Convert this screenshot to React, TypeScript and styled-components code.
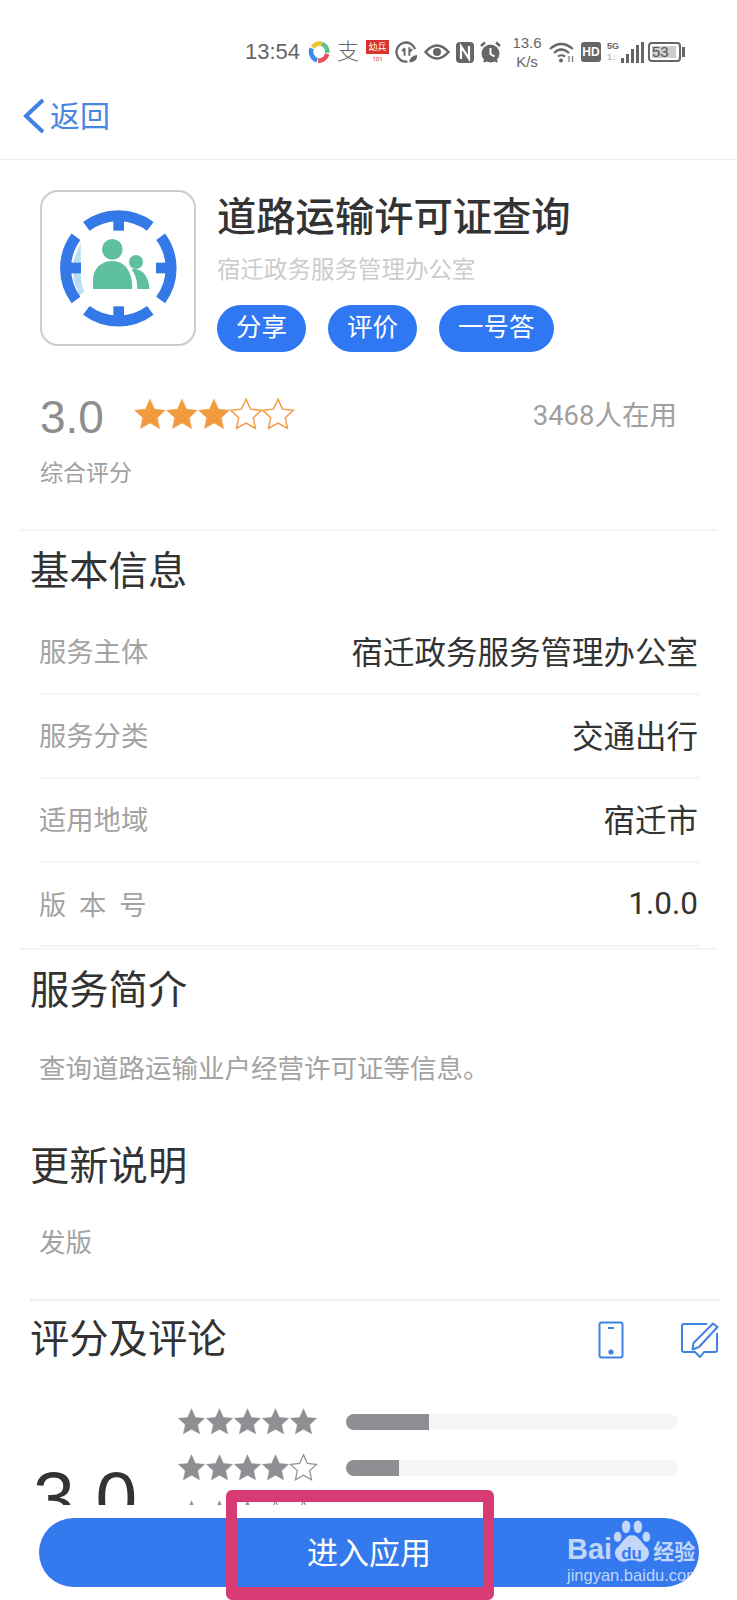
import React from 'react';
import styled, { createGlobalStyle } from 'styled-components';

const GlobalStyle = createGlobalStyle`
  html, body {
    margin: 0;
    padding: 0;
    background: #fff;
  }
  * {
    box-sizing: border-box;
  }
`;

const BLUE = '#3579ee';
const STAR_PATH = 'M12 1.5l3.2 7.1 7.6.8-5.7 5.2 1.6 7.6L12 18.4l-6.7 3.8 1.6-7.6L1.2 9.4l7.6-.8z';

const Star: React.FC<{ size: number; color: string; filled: boolean }> = ({ size, color, filled }) => (
  <svg width={size} height={size} viewBox="0 0 24 24">
    <path d={STAR_PATH} fill={filled ? color : '#fff'} stroke={color} strokeWidth={filled ? 0.4 : 1} strokeLinejoin="miter" />
  </svg>
);

const AppLogo = () => (
  <svg width="152" height="152" viewBox="36 36 456 456">
    <path d="M152 190 L131 240 L131 300 L148 345 L162 335 Q150 300 152 262 Z" fill="#b9dcf7" />
    <g fill="none" stroke="#3579e8" strokeWidth="33">
      <path d="M169 139 A160 160 0 0 1 361 139" />
      <path d="M169 391 A160 160 0 0 0 361 391" />
      <path d="M138 170 A160 160 0 0 0 138 360" />
      <path d="M392 170 A160 160 0 0 1 392 360" />
    </g>
    <g fill="#3579e8">
      <rect x="250" y="115" width="32" height="37" />
      <rect x="250" y="379" width="32" height="37" />
      <rect x="100" y="248" width="53" height="32" />
      <rect x="378" y="248" width="53" height="32" />
    </g>
    <g fill="#5fc0a0">
      <circle cx="247" cy="208" r="31" />
      <path d="M189 327 V300 C189 265 215 243 247 243 C280 243 307 268 307 327 Z" />
      <circle cx="318" cy="246" r="21" />
      <path d="M305 268 C335 262 358 290 358 327 H322 C322 302 316 285 305 268 Z" />
    </g>
  </svg>
);

const StatusIcons = () => (
  <>
    <svg width="22" height="22" viewBox="0 0 24 24" fill="none" strokeWidth="5">
      <path d="M5 7 A10 10 0 0 1 15 3" stroke="#f2c531" />
      <path d="M15 3 A10 10 0 0 1 21 13" stroke="#5cc28a" />
      <path d="M21 14 A10 10 0 0 1 11 21.500" stroke="#e8505b" />
      <path d="M10 21 A10 10 0 0 1 4 8" stroke="#3d8bea" />
    </svg>
    <AlipayGlyph>支</AlipayGlyph>
    <RedBadge>
      <span>幼兵</span>
      <small>101</small>
    </RedBadge>
    <svg width="23" height="24" viewBox="0 0 24 24" fill="none" stroke="#666" strokeWidth="2.400">
      <path d="M21 9 A10 10 0 1 0 13 22" />
      <path d="M10 8 L7.500 11 M10 8 V16 M15 7 V16 M15 12 L18 9" strokeWidth="2" />
      <path d="M15 23 Q15 16 23 15 Q24 22 15 23 Z" fill="#666" stroke="none" />
    </svg>
    <svg width="26" height="18" viewBox="0 0 26 18" fill="none" stroke="#666" strokeWidth="2.500">
      <path d="M1.500 9 Q13 -4 24.500 9 Q13 22 1.500 9 Z" />
      <circle cx="13" cy="9" r="4" fill="#666" stroke="none" />
    </svg>
    <svg width="18" height="21" viewBox="0 0 18 21">
      <rect x="0" y="0" width="18" height="21" rx="4" fill="#666" />
      <path d="M5 17 V4.500 L13 16.500 V4" fill="none" stroke="#fff" strokeWidth="2.200" />
    </svg>
    <svg width="21" height="23" viewBox="0 0 21 23">
      <circle cx="10.500" cy="12.500" r="9" fill="#666" />
      <path d="M1 5 L5 1.500 M20 5 L16 1.500 M4 21 L5.500 19 M17 21 L15.500 19" stroke="#666" strokeWidth="2.400" />
      <path d="M10.500 7 V13 L14.500 15.500" fill="none" stroke="#fff" strokeWidth="2" />
    </svg>
    <NetSpeed>
      <span>13.6</span>
      <span>K/s</span>
    </NetSpeed>
    <svg width="26" height="22" viewBox="0 0 26 22" fill="none" stroke="#666" strokeWidth="2.200">
      <path d="M1 8 Q12 -2 24 8" />
      <path d="M5 12 Q12 5 20 12" />
      <path d="M9 15.500 Q12 13 16 15.500" />
      <circle cx="12" cy="19.500" r="2" fill="#666" stroke="none" />
      <path d="M20 15 V21 M23.500 15 V21" stroke="#888" strokeWidth="1.400" />
    </svg>
    <HdBadge>HD</HdBadge>
    <Signal>
      <SignalLabels>
        <span>5G</span>
        <em>1↓</em>
      </SignalLabels>
      <SignalBars>
        {[5, 9, 14, 18, 21].map((h) => (
          <i key={h} style={{ height: h }} />
        ))}
      </SignalBars>
    </Signal>
    <Battery>
      <BatteryBody>
        <span>53</span>
      </BatteryBody>
      <BatteryCap />
    </Battery>
  </>
);

const PhoneIcon = () => (
  <svg width="26" height="38" viewBox="0 0 26 38" fill="none" stroke="#3f82e0" strokeWidth="2">
    <rect x="1.500" y="1.500" width="23" height="35" rx="2" />
    <path d="M10 7 H16" />
    <circle cx="13" cy="31" r="1.600" fill="#3f82e0" />
  </svg>
);

const EditIcon = () => (
  <svg width="39" height="37" viewBox="0 0 39 37" fill="none" stroke="#3f82e0" strokeWidth="2" strokeLinejoin="round">
    <path d="M27 2 H4 Q2 2 2 4 V28 Q2 30 4 30 H15 L20 35 L24 30 H35 Q37 30 37 28 V11" />
    <path d="M33 1.500 L37.500 5 L19 25 L12.500 27.500 L13.500 21 Z" />
  </svg>
);

const PawMark = () => (
  <svg viewBox="0 0 44 52" fill="rgba(255,255,255,.7)">
    <ellipse cx="15" cy="8" rx="5" ry="7.500" />
    <ellipse cx="29" cy="8" rx="5" ry="7.500" />
    <ellipse cx="5" cy="20" rx="4.500" ry="6" />
    <ellipse cx="39" cy="20" rx="4.500" ry="6" />
    <path d="M22 18 C30 18 33 27 40 33 C46 41 38 51 30 49 C24 47 20 47 14 49 C6 51 -2 41 4 33 C11 27 14 18 22 18 Z" />
  </svg>
);

const infoRows = [
  { label: '服务主体', value: '宿迁政务服务管理办公室' },
  { label: '服务分类', value: '交通出行' },
  { label: '适用地域', value: '宿迁市' },
  { label: '版 本 号', value: '1.0.0' },
];

const scoreRows = [
  { stars: 5, percent: 25 },
  { stars: 4, percent: 16 },
  { stars: 3, percent: 10 },
  { stars: 2, percent: 6 },
  { stars: 1, percent: 20 },
];

const App: React.FC = () => (
  <Page>
    <GlobalStyle />
    <StatusBar>
      <Clock>13:54</Clock>
      <StatusIcons />
    </StatusBar>
    <NavBar>
      <BackLink>
        <svg width="24" height="36" viewBox="0 0 24 36" fill="none" stroke="#3f82e0" strokeWidth="4">
          <path d="M21 2 L4 18 L21 34" />
        </svg>
        <span>返回</span>
      </BackLink>
    </NavBar>

    <AppHeader>
      <LogoBox>
        <AppLogo />
      </LogoBox>
      <AppInfo>
        <AppTitle>道路运输许可证查询</AppTitle>
        <AppOwner>宿迁政务服务管理办公室</AppOwner>
        <Pills>
          <Pill>分享</Pill>
          <Pill>评价</Pill>
          <Pill>一号答</Pill>
        </Pills>
      </AppInfo>
    </AppHeader>

    <Summary>
      <SummaryTop>
        <ScoreText>3.0</ScoreText>
        <StarRow>
          {[1, 2, 3, 4, 5].map((n) => (
            <Star key={n} size={34} color="#f19a3e" filled={n <= 3} />
          ))}
        </StarRow>
        <UsersText>3468人在用</UsersText>
      </SummaryTop>
      <SummaryLabel>综合评分</SummaryLabel>
    </Summary>

    <Section>
      <SectionTitle>基本信息</SectionTitle>
      <InfoList>
        {infoRows.map((row) => (
          <InfoRow key={row.label}>
            <InfoLabel>{row.label}</InfoLabel>
            <InfoValue>{row.value}</InfoValue>
          </InfoRow>
        ))}
      </InfoList>
    </Section>

    <TextSection>
      <SectionTitle>服务简介</SectionTitle>
      <BodyText>查询道路运输业户经营许可证等信息。</BodyText>
    </TextSection>

    <UpdateSection>
      <SectionTitle>更新说明</SectionTitle>
      <BodyText>发版</BodyText>
    </UpdateSection>

    <ReviewSection>
      <ReviewHead>
        <SectionTitle>评分及评论</SectionTitle>
        <ReviewTools>
          <PhoneIcon />
          <EditIcon />
        </ReviewTools>
      </ReviewHead>
      <ScoreGrid>
        <BigScore>3.0</BigScore>
        <ScoreRows>
          {scoreRows.map((row) => (
            <ScoreRow key={row.stars}>
              <GreyStars>
                {[1, 2, 3, 4, 5].map((n) => (
                  <Star key={n} size={29} color="#8e8e93" filled={n <= row.stars} />
                ))}
              </GreyStars>
              <BarTrack>
                <BarFill style={{ width: `${row.percent}%` }} />
              </BarTrack>
            </ScoreRow>
          ))}
        </ScoreRows>
      </ScoreGrid>
    </ReviewSection>

    <Footer>
      <EnterButton>
        <EnterLabel>进入应用</EnterLabel>
        <Watermark>
          <WatermarkTop>
            <b>Bai</b>
            <PawWrap>
              <PawMark />
              <PawText>du</PawText>
            </PawWrap>
            <strong>经验</strong>
          </WatermarkTop>
          <WatermarkUrl>jingyan.baidu.com</WatermarkUrl>
        </Watermark>
      </EnterButton>
    </Footer>
    <Highlight />
  </Page>
);

const Page = styled.div`
  position: relative;
  width: 737px;
  height: 1600px;
  overflow: hidden;
  background: #fff;
  color: #333;
  font-family: 'Roboto', 'Noto Sans CJK SC', sans-serif;
`;

const StatusBar = styled.div`
  display: flex;
  align-items: center;
  gap: 6px;
  height: 72px;
  padding: 32px 0 0 245px;
`;

const Clock = styled.span`
  width: 57px;
  font-family: 'Liberation Sans', sans-serif;
  font-size: 22px;
  color: #666;
`;

const AlipayGlyph = styled.span`
  width: 24px;
  font-size: 22px;
  font-weight: 300;
  line-height: 24px;
  color: #666;
  text-align: center;
`;

const RedBadge = styled.div`
  display: flex;
  flex-direction: column;
  align-items: center;
  width: 23px;
  height: 24px;
  background: #d8322c;
  color: #fff;
  font-size: 9px;
  line-height: 14px;
  overflow: hidden;

  small {
    width: 100%;
    background: #fff;
    color: #d8322c;
    font-size: 6px;
    line-height: 10px;
    text-align: center;
  }
`;

const NetSpeed = styled.div`
  display: flex;
  flex-direction: column;
  align-items: center;
  width: 32px;
  margin-left: 4px;
  font-family: 'Liberation Sans', sans-serif;
  font-size: 15px;
  line-height: 19px;
  color: #666;
`;

const HdBadge = styled.span`
  width: 20px;
  height: 20px;
  border-radius: 3px;
  background: #666;
  color: #fff;
  font-family: 'Liberation Sans', sans-serif;
  font-size: 12px;
  font-weight: 700;
  line-height: 20px;
  text-align: center;
`;

const Signal = styled.div`
  display: flex;
  align-items: flex-end;
  gap: 2px;
  height: 22px;
`;

const SignalLabels = styled.div`
  display: flex;
  flex-direction: column;
  font-family: 'Liberation Sans', sans-serif;
  font-size: 9px;
  font-weight: 700;
  line-height: 11px;
  color: #666;

  em {
    color: #bbb;
    font-style: normal;
  }
`;

const SignalBars = styled.div`
  display: flex;
  align-items: flex-end;
  gap: 2px;

  i {
    display: block;
    width: 3px;
    background: #666;
  }
`;

const Battery = styled.div`
  display: flex;
  align-items: center;
  gap: 1px;
  margin-left: -2px;
`;

const BatteryBody = styled.div`
  width: 33px;
  height: 20px;
  padding: 2px;
  border: 2px solid #666;
  border-radius: 4px;

  span {
    display: block;
    width: 24px;
    height: 12px;
    background: #ccc;
    color: #555;
    font-family: 'Liberation Sans', sans-serif;
    font-size: 15px;
    line-height: 12px;
    text-align: left;
  }
`;

const BatteryCap = styled.div`
  width: 3px;
  height: 10px;
  background: #666;
`;

const NavBar = styled.div`
  display: flex;
  align-items: center;
  height: 88px;
  padding-left: 22px;
  border-bottom: 1px solid #eee;
`;

const BackLink = styled.div`
  display: flex;
  align-items: center;
  gap: 4px;
  color: #4a86e0;
  font-size: 30px;

  span {
    padding-bottom: 4px;
  }
`;

const AppHeader = styled.div`
  display: flex;
  gap: 21px;
  padding: 30px 0 0 40px;
`;

const LogoBox = styled.div`
  display: flex;
  align-items: center;
  justify-content: center;
  width: 156px;
  height: 156px;
  border: 2px solid #ccc;
  border-radius: 18px;
`;

const AppInfo = styled.div`
  display: flex;
  flex-direction: column;
  align-items: flex-start;
`;

const AppTitle = styled.h1`
  margin: 0;
  height: 52px;
  font-size: 39.300px;
  font-weight: 500;
  line-height: 56px;
  color: #333;
`;

const AppOwner = styled.div`
  height: 52px;
  font-size: 23.500px;
  line-height: 56px;
  color: #ccc;
`;

const Pills = styled.div`
  display: flex;
  gap: 22px;
  margin-top: 11px;
`;

const Pill = styled.div`
  height: 47px;
  padding: 0 19px;
  border-radius: 24px;
  background: #3077f3;
  color: #fff;
  font-size: 25.500px;
  line-height: 45px;
`;

const Summary = styled.div`
  height: 179px;
  margin: 0 20px;
  padding: 32px 40px 0 20px;
  border-bottom: 2px solid #f4f4f4;
`;

const SummaryTop = styled.div`
  display: flex;
  align-items: center;
  height: 66px;
`;

const ScoreText = styled.span`
  width: 94px;
  font-family: 'Liberation Sans', sans-serif;
  font-size: 46px;
  color: #8e8e8e;
`;

const StarRow = styled.div`
  display: flex;
  flex: 1;
  margin: 0 0 6px -1px;

  svg {
    margin-right: -2px;
  }
`;

const UsersText = styled.span`
  margin-bottom: 8px;
  font-size: 27.500px;
  color: #a0a0a0;
`;

const SummaryLabel = styled.div`
  margin-top: 8px;
  font-size: 23px;
  line-height: 32px;
  color: #a0a0a0;
`;

const Section = styled.div`
  margin: 0 20px;
  padding: 1px 0 0 10px;
`;

const SectionTitle = styled.h2`
  margin: 0;
  font-size: 39.300px;
  font-weight: 400;
  line-height: 80px;
  color: #333;
`;

const InfoList = styled.div`
  margin: -1px 18px 1px 9px;
`;

const InfoRow = styled.div`
  display: flex;
  align-items: center;
  justify-content: space-between;
  height: 84px;
  padding-bottom: 5px;
  border-bottom: 2px solid #f4f4f4;

  &:last-child {
    padding-bottom: 2px;
  }
`;

const InfoLabel = styled.span`
  font-size: 27.300px;
  word-spacing: 6px;
  color: #a3a3a3;
`;

const InfoValue = styled.span`
  margin-right: 1px;
  font-size: 31.500px;
  color: #333;
`;

const TextSection = styled.div`
  height: 179px;
  margin: 0 20px;
  padding: 1px 0 0 10px;
  border-top: 2px solid #f4f4f4;
`;

const UpdateSection = styled(TextSection)`
  height: 172px;
  padding-top: 0;
  border-top: none;

  & > div {
    margin-top: 16px;
  }
`;

const BodyText = styled.div`
  padding-left: 9px;
  margin-top: 18px;
  font-size: 26.500px;
  line-height: 40px;
  color: #a3a3a3;
`;

const ReviewSection = styled.div`
  margin: 0 17px 0 30px;
  border-top: 2px solid #eee;
`;

const ReviewHead = styled.div`
  display: flex;
  align-items: center;
  justify-content: space-between;
  height: 78px;
`;

const ReviewTools = styled.div`
  display: flex;
  align-items: center;
  gap: 56px;
  margin-right: 1px;
`;

const ScoreGrid = styled.div`
  display: flex;
  align-items: center;
  margin-top: 28px;
`;

const BigScore = styled.span`
  width: 147px;
  margin-bottom: 32px;
  padding-left: 3px;
  font-family: 'Liberation Sans', sans-serif;
  font-size: 75px;
  line-height: 74px;
  color: #333;
`;

const ScoreRows = styled.div`
  display: flex;
  flex-direction: column;
  gap: 17px;
`;

const ScoreRow = styled.div`
  display: flex;
  align-items: center;
  gap: 30px;
`;

const GreyStars = styled.div`
  display: flex;
  width: 139px;

  svg {
    flex: none;
    margin-right: -1px;
  }
`;

const BarTrack = styled.div`
  width: 332px;
  height: 16px;
  border-radius: 8px;
  overflow: hidden;
  background: #f6f6f6;
`;

const BarFill = styled.div`
  height: 100%;
  background: #8e8e93;
`;

const Footer = styled.div`
  position: absolute;
  left: 0;
  right: 0;
  bottom: 0;
  height: 95px;
  padding: 13px 38px 0 39px;
  background: #fff;
`;

const EnterButton = styled.div`
  position: relative;
  display: flex;
  align-items: center;
  justify-content: center;
  height: 69px;
  border-radius: 35px;
  background: ${BLUE};
  color: #fff;
  font-size: 31px;
`;

const EnterLabel = styled.span`
  padding-bottom: 4px;
`;

const Watermark = styled.div`
  position: absolute;
  top: 2px;
  left: 528px;
  width: 135px;
  color: rgba(255, 255, 255, 0.7);
`;

const WatermarkTop = styled.div`
  display: flex;
  align-items: flex-end;
  height: 46px;
  font-family: 'Liberation Sans', sans-serif;

  b {
    font-size: 29px;
    line-height: 34px;
  }

  strong {
    font-family: 'Noto Sans CJK SC', sans-serif;
    font-size: 21px;
    line-height: 32px;
  }
`;

const PawWrap = styled.div`
  position: relative;
  width: 40px;
  height: 46px;
  margin-right: 1px;

  svg {
    display: block;
    width: 38px;
    height: 44px;
    margin: 0 0 0 1px;
  }
`;

const PawText = styled.span`
  position: absolute;
  left: 9px;
  bottom: 3px;
  color: ${BLUE};
  font-size: 17px;
  font-weight: 700;
  line-height: 18px;
`;

const WatermarkUrl = styled.div`
  font-family: 'Liberation Sans', sans-serif;
  font-size: 16.500px;
  line-height: 18px;
  white-space: nowrap;
`;

const Highlight = styled.div`
  position: absolute;
  left: 226px;
  top: 1490px;
  width: 268px;
  height: 110px;
  border-style: solid;
  border-color: #d83a74;
  border-width: 12px 11px 13px;
  border-radius: 6px;
`;

export default App;
